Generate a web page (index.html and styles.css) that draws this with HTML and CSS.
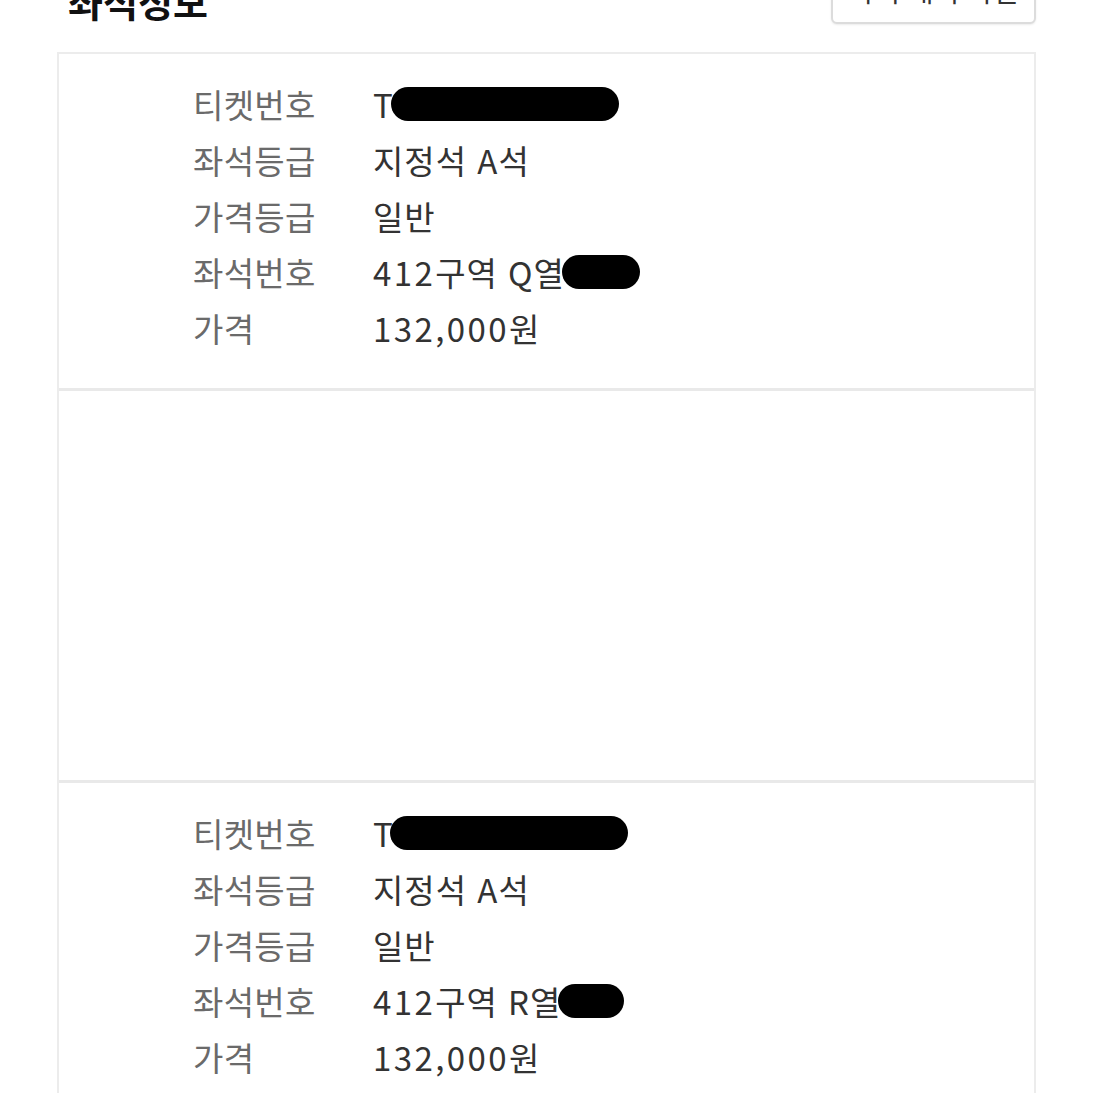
FILE: index.html
```html
<!DOCTYPE html>
<html lang="ko">
<head>
<meta charset="utf-8">
<link rel="stylesheet" href="styles.css">
</head>
<body>
<div class="page">
  <div class="header">
    <h2 class="title">좌석정보</h2>
    <button class="btn">좌석 배치 확인</button>
  </div>
  <div class="card">
    <div class="section">
      <div class="row"><span class="label">티켓번호</span><span class="value">T<span class="redact r1"></span></span></div>
      <div class="row"><span class="label">좌석등급</span><span class="value">지정석 A석</span></div>
      <div class="row"><span class="label">가격등급</span><span class="value">일반</span></div>
      <div class="row"><span class="label">좌석번호</span><span class="value"><span class="num">412</span>구역 Q열<span class="redact r2"></span></span></div>
      <div class="row"><span class="label">가격</span><span class="value"><span class="num">132,000</span>원</span></div>
    </div>
    <div class="section empty"></div>
    <div class="section">
      <div class="row"><span class="label">티켓번호</span><span class="value">T<span class="redact r3"></span></span></div>
      <div class="row"><span class="label">좌석등급</span><span class="value">지정석 A석</span></div>
      <div class="row"><span class="label">가격등급</span><span class="value">일반</span></div>
      <div class="row"><span class="label">좌석번호</span><span class="value"><span class="num">412</span>구역 R열<span class="redact r4"></span></span></div>
      <div class="row"><span class="label">가격</span><span class="value"><span class="num">132,000</span>원</span></div>
    </div>
  </div>
</div>
</body>
</html>
```
FILE: styles.css
```css
* { box-sizing: border-box; }
html, body { margin: 0; padding: 0; background: #fff; overflow: hidden; }
body {
  font-family: "Noto Sans CJK KR", "Noto Sans", sans-serif;
  color: #333;
}
.page { padding: 0 57px; }
.header {
  display: flex;
  justify-content: space-between;
  align-items: center;
  height: 46px;
  margin-top: -24px;
  margin-bottom: 30px;
}
.title {
  margin: 0 0 0 11px;
  font-size: 38px;
  font-weight: 700;
  color: #111;
  line-height: 46px;
  position: relative;
  top: 2px;
}
.btn {
  width: 205px;
  height: 50px;
  margin-top: 0;
  background: #fff;
  border: 2px solid #dcdcdc;
  border-radius: 6px;
  box-shadow: 0 1px 2px rgba(0,0,0,0.08);
  font-family: inherit;
  font-size: 28px;
  color: #333;
  padding: 0 0 18px;
  line-height: 28px;
}
.card {
  border: 2px solid #ececec;
  border-bottom: none;
  min-height: 1100px;
}
.section {
  padding: 22px 0 32px 134px;
}
.section + .section { border-top: 3px solid #e9e9e9; }
.section.empty { height: 392px; padding: 0; }
.row {
  display: flex;
  align-items: center;
  height: 56px;
}
.label {
  width: 180px;
  color: #6a6a6a;
  flex: none;
  font-size: 33px;
  letter-spacing: 0.3px;
}
.value {
  color: #333;
  display: flex;
  align-items: center;
  font-size: 33px;
  letter-spacing: 1px;
  white-space: pre;
}
.num { letter-spacing: 2.4px; }
.redact {
  display: inline-block;
  height: 34px;
  background: #000;
  border-radius: 17px;
}
.r1 { width: 228px; margin-left: -3px; }
.r2 { width: 78px; margin-left: -3px; }
.r3 { width: 238px; margin-left: -4px; }
.r4 { width: 66px; margin-left: -3px; }
```
